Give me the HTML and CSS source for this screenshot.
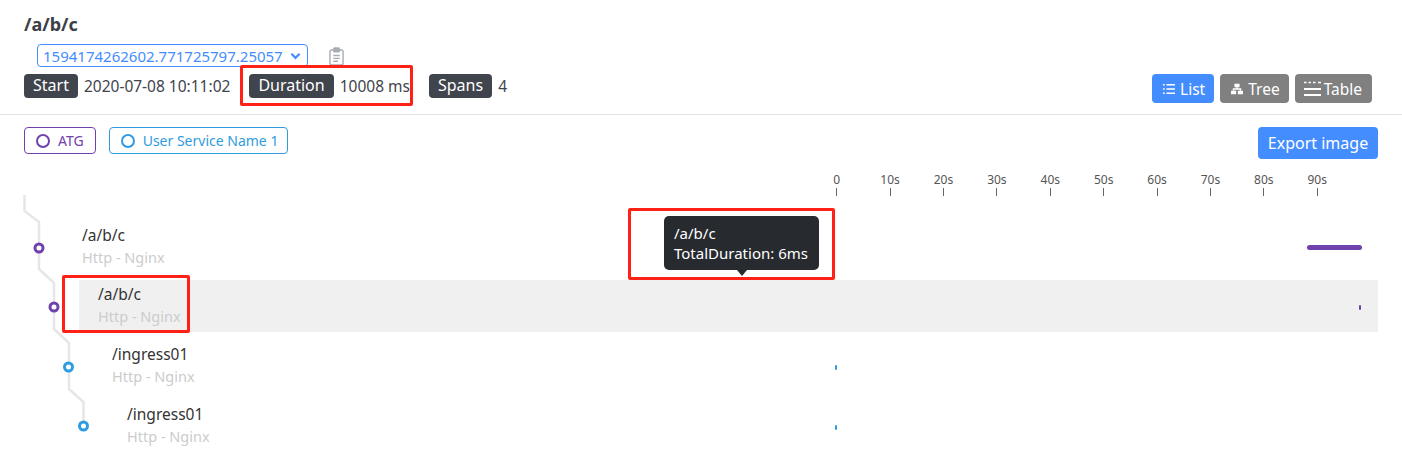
FILE: index.html
```html
<!DOCTYPE html>
<html lang="en">
<head>
    <meta charset="UTF-8">
    <title>/a/b/c</title>
    <link rel="stylesheet" href="styles.css">
</head>
<body>
    <header class="trace-header">
        <h1 class="trace-title">/a/b/c</h1>
        <div class="trace-id-row">
            <div class="trace-select">
                <span>1594174262602.771725797.25057</span>
                <svg class="chevron" viewBox="0 0 12 8"><path d="M1.5 1.5 6 6l4.5-4.5"/></svg>
            </div>
            <svg class="clipboard" viewBox="0 0 16 20">
                <rect x="1" y="3" width="14" height="16" rx="2"/>
                <rect class="clip" x="5" y="1" width="6" height="4" rx="1"/>
                <path d="M4.5 9h7M4.5 12h7M4.5 15h5"/>
            </svg>
        </div>
        <div class="trace-meta">
            <div class="meta-items">
                <span class="tag">Start</span><span class="meta-value">2020-07-08 10:11:02</span>
                <span class="tag">Duration</span><span class="meta-value">10008 ms</span>
                <span class="tag">Spans</span><span class="meta-value">4</span>
            </div>
            <div class="view-switch">
                <button class="view-btn active">
                    <svg class="view-icon" viewBox="0 0 14 14"><path d="M4 2h10M4 7h10M4 12h10"/><path d="M0 2h2M0 7h2M0 12h2"/></svg>
                    List
                </button>
                <button class="view-btn view-btn-tree">
                    <svg class="view-icon" viewBox="0 0 14 14"><path class="solid" d="M4 1h6v4H4zM0 9h6v4H0zM8 9h6v4H8z"/><path d="M7 5v2M3 9V7h8v2"/></svg>
                    Tree
                </button>
                <button class="view-btn view-btn-table">
                    <svg class="table-icon" viewBox="0 0 17 16"><path class="dots" d="M0 1.5h2.5M4.5 1.5h2.5M9 1.5h2.5M14 1.5h3"/><path d="M0 8h17M0 14h17"/></svg>
                    Table
                </button>
            </div>
        </div>
    </header>

    <main class="trace-body">
        <div class="legend-row">
            <div class="services">
                <span class="service service-purple"><i class="dot"></i>ATG</span>
                <span class="service service-blue"><i class="dot"></i>User Service Name 1</span>
            </div>
            <button class="export-btn">Export image</button>
        </div>

        <div class="axis">
            <div class="tick"><span>0</span></div>
            <div class="tick"><span>10s</span></div>
            <div class="tick"><span>20s</span></div>
            <div class="tick"><span>30s</span></div>
            <div class="tick"><span>40s</span></div>
            <div class="tick"><span>50s</span></div>
            <div class="tick"><span>60s</span></div>
            <div class="tick"><span>70s</span></div>
            <div class="tick"><span>80s</span></div>
            <div class="tick"><span>90s</span></div>
        </div>

        <svg class="tree-lines" viewBox="0 0 100 280" width="100" height="280">
            <path d="M24.5 0V16L39 27V74L54 88V134L69 148V194L83.5 207V231"/>
            <circle class="node-purple" cx="39" cy="53" r="4"/>
            <circle class="node-purple" cx="54" cy="112" r="4"/>
            <circle class="node-blue" cx="68.5" cy="172" r="4"/>
            <circle class="node-blue" cx="83.5" cy="231" r="4"/>
        </svg>

        <div class="span-list">
            <div class="span-row depth-1">
                <div class="span-name">/a/b/c</div>
                <div class="span-type">Http - Nginx</div>
                <i class="bar bar-purple" style="left: 1244px; width: 55px"></i>
            </div>
            <div class="span-row depth-2 selected">
                <div class="span-name">/a/b/c</div>
                <div class="span-type">Http - Nginx</div>
                <i class="bar bar-tiny bar-purple" style="left: 1280px"></i>
            </div>
            <div class="span-row depth-3">
                <div class="span-name">/ingress01</div>
                <div class="span-type">Http - Nginx</div>
                <i class="bar bar-tiny bar-blue" style="left: 742px"></i>
            </div>
            <div class="span-row depth-4">
                <div class="span-name">/ingress01</div>
                <div class="span-type">Http - Nginx</div>
                <i class="bar bar-tiny bar-blue" style="left: 727px"></i>
            </div>
        </div>

        <div class="tooltip">
            <div>/a/b/c</div>
            <div>TotalDuration: 6ms</div>
        </div>
    </main>

    <!-- red boxes drawn on the screenshot -->
    <div class="mark mark-duration"></div>
    <div class="mark mark-tooltip"></div>
    <div class="mark mark-row"></div>
</body>
</html>
```

FILE: styles.css
```css
* {
    box-sizing: border-box;
}

body {
    margin: 0;
    position: relative;
    height: 469px;
    overflow: hidden;
    background: #fff;
    color: #333;
    font-family: "Noto Sans", "Noto Sans CJK SC", sans-serif;
    font-size: 14px;
}

.trace-header {
    height: 115px;
    padding: 13px 30px 0 24px;
    border-bottom: 1px solid #e3e3e3;
}

.trace-title {
    margin: 0;
    height: 25px;
    font-size: 18px;
    line-height: 22px;
    font-weight: 700;
    color: #3b3f46;
}

.trace-id-row {
    display: flex;
    align-items: center;
    height: 29px;
    padding: 6px 0 0 13px;
}

.trace-select {
    display: flex;
    align-items: center;
    justify-content: space-between;
    width: 271px;
    height: 23px;
    padding: 0 6px 0 5px;
    border: 1px solid #448dfe;
    border-radius: 4px;
    color: #448dfe;
    font-size: 15px;
    white-space: nowrap;
}

.chevron {
    width: 11px;
    height: 8px;
    fill: none;
    stroke: #448dfe;
    stroke-width: 2.4;
}

.clipboard {
    width: 15px;
    height: 19px;
    margin: 2px 0 0 21px;
    fill: none;
    stroke: #a9adb3;
    stroke-width: 1.5;
}

.clipboard .clip {
    fill: #a9adb3;
}

.trace-meta {
    display: flex;
    justify-content: space-between;
    align-items: flex-start;
    margin-top: 7px;
}

.meta-items {
    display: flex;
    align-items: center;
    height: 24px;
}

.tag {
    height: 24px;
    padding: 0 9px;
    border-radius: 4px;
    background: #40444c;
    color: #fff;
    font-size: 16px;
    line-height: 23px;
}

.meta-value {
    margin: 0 19px 0 6px;
    font-size: 15.5px;
    color: #40444c;
}

.view-switch {
    display: flex;
    gap: 6px;
}

.view-btn {
    display: flex;
    align-items: center;
    gap: 6px;
    height: 29px;
    padding: 0 9px 0 11px;
    border: 0;
    border-radius: 4px;
    background: #808080;
    color: #fff;
    font-family: inherit;
    font-size: 15.5px;
}

.view-btn.active {
    gap: 5px;
    background: #448dfe;
}

.view-btn-tree {
    gap: 5px;
}

.view-btn-table {
    gap: 3px;
    padding: 0 10px 0 9px;
}

.view-icon {
    width: 12px;
    height: 12px;
    fill: none;
    stroke: #fff;
    stroke-width: 1.8;
}

.view-icon .solid {
    fill: #fff;
    stroke: none;
}

.table-icon {
    width: 17px;
    height: 16px;
    fill: none;
    stroke: #fff;
    stroke-width: 2;
}

.table-icon .dots {
    stroke-width: 1.5;
}

.trace-body {
    position: relative;
    padding: 12px 24px 0;
}

.legend-row {
    display: flex;
    justify-content: space-between;
    align-items: flex-start;
    height: 46px;
}

.services {
    display: flex;
    gap: 13px;
}

.service {
    display: flex;
    align-items: center;
    gap: 8px;
    height: 27px;
    padding: 0 9px 0 11px;
    border: 1px solid currentColor;
    border-radius: 4px;
    font-size: 14px;
}

.service-purple {
    padding-right: 11px;
    color: #6f42ac;
}

.service-blue {
    color: #2f9be0;
}

.dot {
    width: 14px;
    height: 14px;
    border: 2px solid currentColor;
    border-radius: 50%;
}

.export-btn {
    width: 120px;
    height: 32px;
    border: 0;
    border-radius: 4px;
    background: #448dfe;
    color: #fff;
    font-family: inherit;
    font-size: 16px;
}

.axis {
    display: flex;
    height: 47px;
    margin-left: 786px;
}

.tick {
    display: flex;
    flex-direction: column;
    align-items: center;
    width: 53.4px;
    height: 24px;
    color: #555;
    font-size: 12px;
    line-height: 14px;
}

.tick::after {
    content: "";
    width: 1px;
    height: 8px;
    margin-top: 1px;
    background: #666;
}

.tree-lines {
    position: absolute;
    left: 0;
    top: 80px;
    fill: none;
}

.tree-lines path {
    stroke: #e6e6e6;
    stroke-width: 2.5;
}

.tree-lines circle {
    fill: #fff;
    stroke-width: 3;
}

.node-purple {
    stroke: #6f42ac;
}

.node-blue {
    stroke: #2f9be0;
}

.span-list {
    display: flex;
    flex-direction: column;
    gap: 8px;
}

.span-row {
    position: relative;
    height: 52px;
    padding: 3px 0 0 19px;
}

.depth-1 {
    margin-left: 39px;
    padding-top: 4px;
}

.depth-2 {
    margin-left: 55px;
}

.depth-3 {
    margin-left: 69px;
}

.depth-4 {
    margin-left: 84px;
}

.selected {
    background: #f0f0f0;
}

.span-name {
    height: 22px;
    font-size: 15.5px;
    line-height: 22px;
    color: #333;
}

.span-type {
    font-size: 14.5px;
    line-height: 22px;
    color: #ccc;
}

.bar {
    position: absolute;
    top: 25px;
    height: 5px;
    border-radius: 3px;
}

.bar-tiny {
    width: 2px;
}

.bar-purple {
    background: #6f42ac;
}

.bar-blue {
    background: #2f9be0;
}

.tooltip {
    position: absolute;
    left: 664px;
    top: 101px;
    width: 155px;
    height: 54px;
    padding: 7px 10px;
    border-radius: 5px;
    background: #272a2f;
    color: #fff;
    font-size: 15px;
    line-height: 20px;
}

.tooltip::after {
    content: "";
    position: absolute;
    left: 73px;
    bottom: -6px;
    border: 5px solid transparent;
    border-bottom: 0;
    border-top: 6px solid #272a2f;
}

.mark {
    position: absolute;
    border: 3px solid #ff2016;
    border-radius: 2px;
}

.mark-duration {
    left: 240px;
    top: 65px;
    width: 173px;
    height: 41px;
}

.mark-tooltip {
    left: 628px;
    top: 208px;
    width: 207px;
    height: 72px;
}

.mark-row {
    left: 62px;
    top: 275px;
    width: 128px;
    height: 58px;
}
```
